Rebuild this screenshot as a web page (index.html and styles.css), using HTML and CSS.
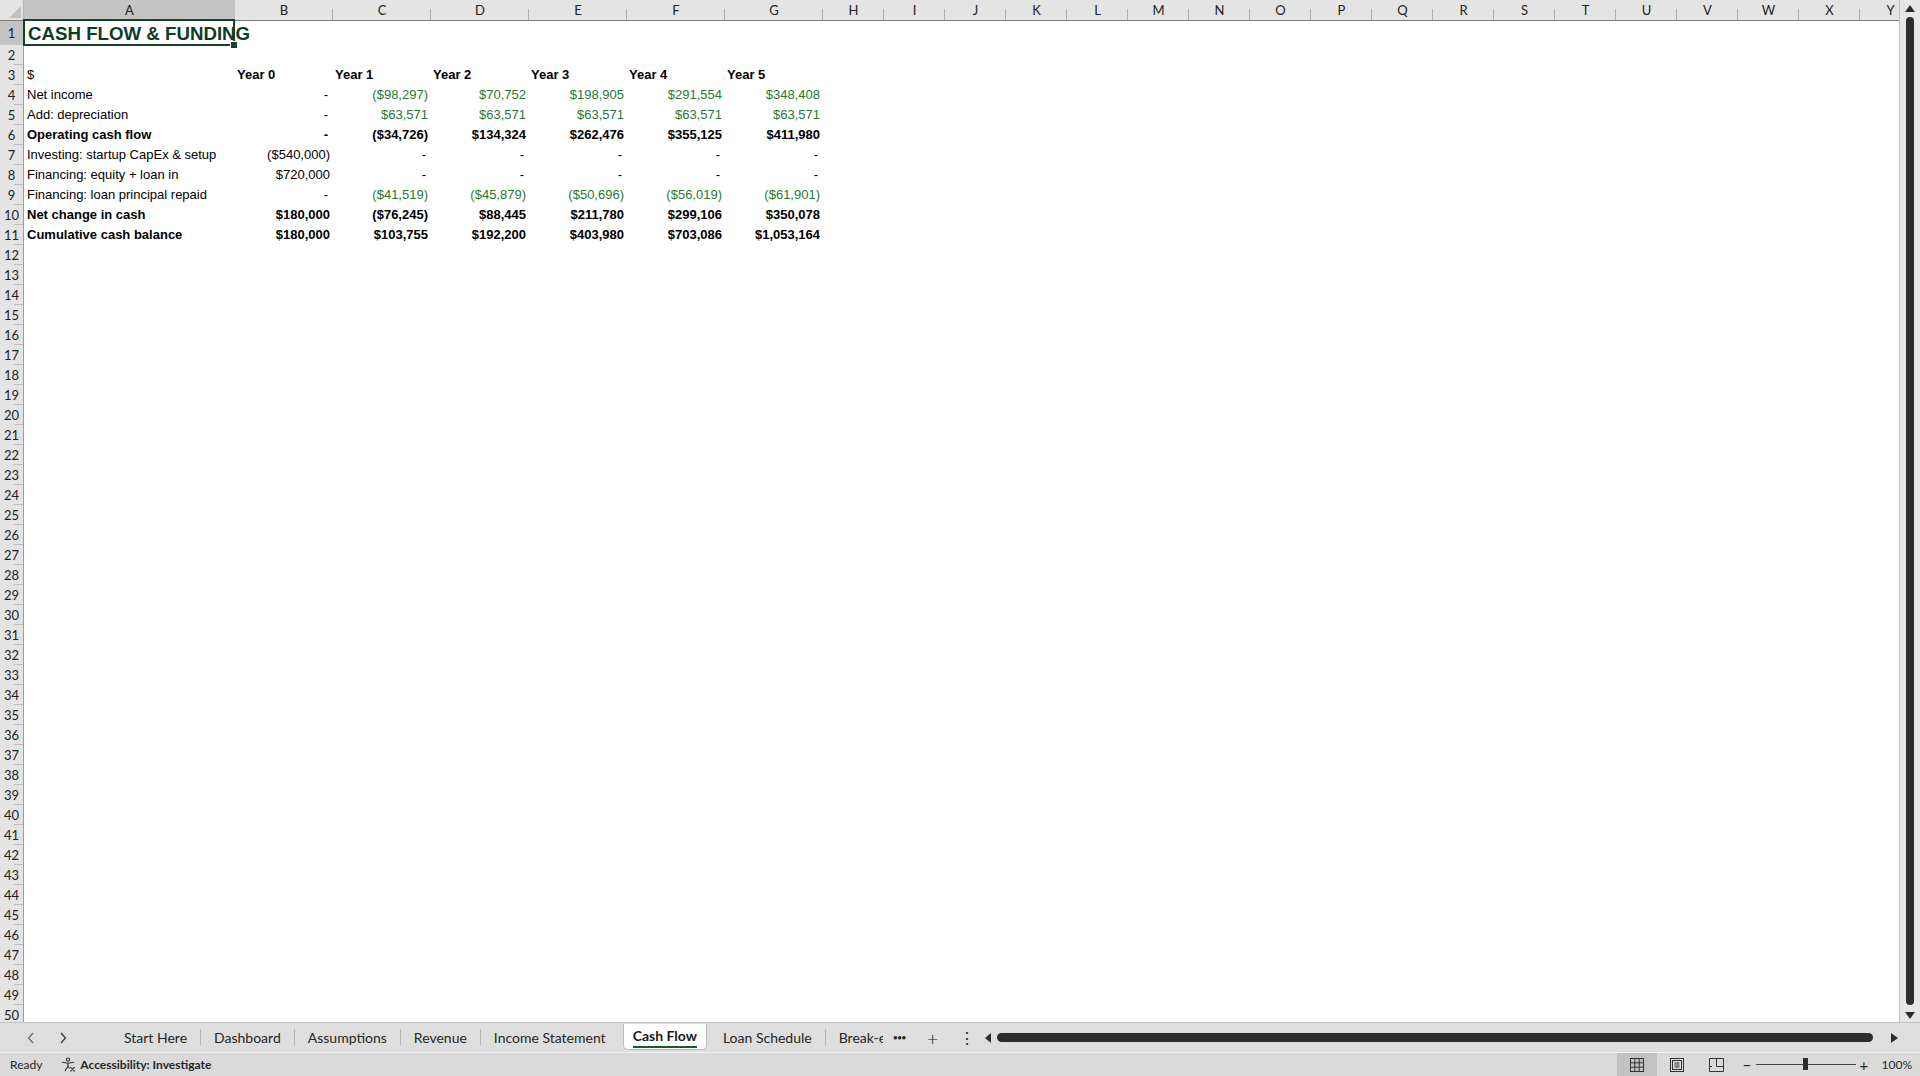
FILE: index.html
```html
<!DOCTYPE html>
<html>
<head>
<meta charset="utf-8">
<title>Cash Flow</title>
<link rel="stylesheet" href="styles.css">
</head>
<body>
<div class="app">
  <div class="main">
    <div class="sheet">
      <div class="colhead">
        <div class="corner"><span class="tri"></span></div>
        <div class="ch sel">A</div>
        <div class="ch">B</div><div class="ch">C</div><div class="ch">D</div><div class="ch">E</div><div class="ch">F</div><div class="ch">G</div>
        <div class="ch">H</div><div class="ch">I</div><div class="ch">J</div><div class="ch">K</div><div class="ch">L</div><div class="ch">M</div>
        <div class="ch">N</div><div class="ch">O</div><div class="ch">P</div><div class="ch">Q</div><div class="ch">R</div><div class="ch">S</div>
        <div class="ch">T</div><div class="ch">U</div><div class="ch">V</div><div class="ch">W</div><div class="ch">X</div><div class="ch">Y</div>
      </div>
      <div class="row r1"><div class="rh sel">1</div><div class="c title selcell">CASH FLOW &amp; FUNDING</div></div>
      <div class="row"><div class="rh">2</div></div>
      <div class="row"><div class="rh">3</div><div class="c lbl">$</div><div class="c hd">Year 0</div><div class="c hd">Year 1</div><div class="c hd">Year 2</div><div class="c hd">Year 3</div><div class="c hd">Year 4</div><div class="c hd">Year 5</div></div>
      <div class="row"><div class="rh">4</div><div class="c lbl">Net income</div><div class="c num dash">-</div><div class="c num g">($98,297)</div><div class="c num g">$70,752</div><div class="c num g">$198,905</div><div class="c num g">$291,554</div><div class="c num g">$348,408</div></div>
      <div class="row"><div class="rh">5</div><div class="c lbl">Add: depreciation</div><div class="c num dash">-</div><div class="c num g">$63,571</div><div class="c num g">$63,571</div><div class="c num g">$63,571</div><div class="c num g">$63,571</div><div class="c num g">$63,571</div></div>
      <div class="row bold"><div class="rh">6</div><div class="c lbl">Operating cash flow</div><div class="c num dash">-</div><div class="c num">($34,726)</div><div class="c num">$134,324</div><div class="c num">$262,476</div><div class="c num">$355,125</div><div class="c num">$411,980</div></div>
      <div class="row"><div class="rh">7</div><div class="c lbl">Investing: startup CapEx &amp; setup</div><div class="c num">($540,000)</div><div class="c num dash">-</div><div class="c num dash">-</div><div class="c num dash">-</div><div class="c num dash">-</div><div class="c num dash">-</div></div>
      <div class="row"><div class="rh">8</div><div class="c lbl">Financing: equity + loan in</div><div class="c num">$720,000</div><div class="c num dash">-</div><div class="c num dash">-</div><div class="c num dash">-</div><div class="c num dash">-</div><div class="c num dash">-</div></div>
      <div class="row"><div class="rh">9</div><div class="c lbl">Financing: loan principal repaid</div><div class="c num dash">-</div><div class="c num g">($41,519)</div><div class="c num g">($45,879)</div><div class="c num g">($50,696)</div><div class="c num g">($56,019)</div><div class="c num g">($61,901)</div></div>
      <div class="row bold"><div class="rh">10</div><div class="c lbl">Net change in cash</div><div class="c num">$180,000</div><div class="c num">($76,245)</div><div class="c num">$88,445</div><div class="c num">$211,780</div><div class="c num">$299,106</div><div class="c num">$350,078</div></div>
      <div class="row bold"><div class="rh">11</div><div class="c lbl">Cumulative cash balance</div><div class="c num">$180,000</div><div class="c num">$103,755</div><div class="c num">$192,200</div><div class="c num">$403,980</div><div class="c num">$703,086</div><div class="c num">$1,053,164</div></div>
      <div class="row"><div class="rh">12</div></div>
      <div class="row"><div class="rh">13</div></div>
      <div class="row"><div class="rh">14</div></div>
      <div class="row"><div class="rh">15</div></div>
      <div class="row"><div class="rh">16</div></div>
      <div class="row"><div class="rh">17</div></div>
      <div class="row"><div class="rh">18</div></div>
      <div class="row"><div class="rh">19</div></div>
      <div class="row"><div class="rh">20</div></div>
      <div class="row"><div class="rh">21</div></div>
      <div class="row"><div class="rh">22</div></div>
      <div class="row"><div class="rh">23</div></div>
      <div class="row"><div class="rh">24</div></div>
      <div class="row"><div class="rh">25</div></div>
      <div class="row"><div class="rh">26</div></div>
      <div class="row"><div class="rh">27</div></div>
      <div class="row"><div class="rh">28</div></div>
      <div class="row"><div class="rh">29</div></div>
      <div class="row"><div class="rh">30</div></div>
      <div class="row"><div class="rh">31</div></div>
      <div class="row"><div class="rh">32</div></div>
      <div class="row"><div class="rh">33</div></div>
      <div class="row"><div class="rh">34</div></div>
      <div class="row"><div class="rh">35</div></div>
      <div class="row"><div class="rh">36</div></div>
      <div class="row"><div class="rh">37</div></div>
      <div class="row"><div class="rh">38</div></div>
      <div class="row"><div class="rh">39</div></div>
      <div class="row"><div class="rh">40</div></div>
      <div class="row"><div class="rh">41</div></div>
      <div class="row"><div class="rh">42</div></div>
      <div class="row"><div class="rh">43</div></div>
      <div class="row"><div class="rh">44</div></div>
      <div class="row"><div class="rh">45</div></div>
      <div class="row"><div class="rh">46</div></div>
      <div class="row"><div class="rh">47</div></div>
      <div class="row"><div class="rh">48</div></div>
      <div class="row"><div class="rh">49</div></div>
      <div class="row"><div class="rh">50</div></div>
    </div>
    <div class="vscroll">
      <span class="arr up"></span>
      <span class="vthumb"></span>
      <span class="arr down"></span>
    </div>
  </div>

  <div class="tabbar">
    <div class="nav">
      <svg width="8" height="12" viewBox="0 0 8 12"><path d="M6 1 L1.5 6 L6 11" fill="none" stroke="#666" stroke-width="1.2"/></svg>
      <svg width="8" height="12" viewBox="0 0 8 12"><path d="M2 1 L6.5 6 L2 11" fill="none" stroke="#333" stroke-width="1.2"/></svg>
    </div>
    <div class="tabs">
      <div class="tab">Start Here</div><span class="sep"></span>
      <div class="tab">Dashboard</div><span class="sep"></span>
      <div class="tab">Assumptions</div><span class="sep"></span>
      <div class="tab">Revenue</div><span class="sep"></span>
      <div class="tab">Income Statement</div>
      <div class="tab active"><span class="lab">Cash Flow</span></div>
      <div class="tab">Loan Schedule</div><span class="sep"></span>
      <div class="tab clip"><span class="cliptext">Break-even</span></div>
      <div class="more">•••</div>
      <div class="plus">+</div>
      <div class="kebab">⋮</div>
    </div>
    <div class="hscroll">
      <span class="harr left"></span>
      <span class="hthumb"></span>
      <span class="harr right"></span>
    </div>
  </div>

  <div class="status">
    <div class="st-left">
      <span class="ready">Ready</span>
      <span class="acc">
        <svg width="15" height="15" viewBox="0 0 15 15" fill="none" stroke="#333" stroke-width="1.1" stroke-linecap="round">
          <circle cx="7" cy="2.6" r="1.6"/>
          <path d="M1.5 5.2 L7 6.2 L12.5 5.2"/>
          <path d="M7 6.2 V9.2 L4.2 13.6"/>
          <path d="M7 9.2 L8.2 11"/>
          <path d="M9.6 10.4 L13.4 14.2 M13.4 10.4 L9.6 14.2"/>
        </svg>
        <b>Accessibility: Investigate</b>
      </span>
    </div>
    <div class="st-right">
      <span class="view on">
        <svg width="14" height="14" viewBox="0 0 14 14" fill="none" stroke="#333" stroke-width="1"><rect x="0.5" y="0.5" width="13" height="13"/><path d="M4.8 0.5 V13.5 M9.2 0.5 V13.5 M0.5 4.8 H13.5 M0.5 9.2 H13.5"/></svg>
      </span>
      <span class="view">
        <svg width="14" height="14" viewBox="0 0 14 14" fill="none" stroke="#333" stroke-width="1"><rect x="0.5" y="0.5" width="13" height="13"/><rect x="2.5" y="2.5" width="9" height="9"/><path d="M4.5 5 H9.5 M4.5 7 H9.5 M4.5 9 H9.5"/></svg>
      </span>
      <span class="view">
        <svg width="15" height="14" viewBox="0 0 15 14" fill="none" stroke="#333" stroke-width="1"><path d="M0.5 0.5 H14.5 V13.5 H0.5 Z"/><path d="M7.5 0.5 V8.5 H14.5"/><path d="M0.5 8.5 H3"/></svg>
      </span>
      <span class="zoom">
        <span class="zm">−</span>
        <span class="slider"><span class="knob"></span></span>
        <span class="zp">+</span>
        <span class="pct">100%</span>
      </span>
    </div>
  </div>
</div>
</body>
</html>
```

FILE: styles.css
```css
* { box-sizing: border-box; }

html, body {
  margin: 0;
  padding: 0;
  width: 1920px;
  height: 1076px;
  overflow: hidden;
  background: #ffffff;
}

body {
  font-family: "Liberation Sans", Arial, sans-serif;
  font-size: 13px;
  color: #000;
}

.app {
  width: 1920px;
  height: 1076px;
  display: flex;
  flex-direction: column;
}

/* ---------- sheet ---------- */
.main {
  height: 1023px;
  display: flex;
  border-bottom: 1px solid #c4c4c4;
  flex: none;
}

.sheet {
  flex: 1;
  overflow: hidden;
  background: #fff;
}

.colhead {
  display: grid;
  grid-template-columns: 24px 211px repeat(6, 98px) repeat(18, 61px);
  height: 21px;
  background: #e4e4e4;
  border-bottom: 1px solid #7c7c7c;
  font-family: Lato, "Liberation Sans", sans-serif;
  font-size: 13px;
  color: #222;
}

.corner {
  position: relative;
  border-right: 1px solid #b4b4b4;
}

.corner .tri {
  position: absolute;
  right: 2px;
  bottom: 2px;
  width: 0;
  height: 0;
  border-left: 12px solid transparent;
  border-bottom: 12px solid #c2c2c2;
}

.ch {
  position: relative;
  text-align: center;
  line-height: 20px;
}

.ch::after {
  content: "";
  position: absolute;
  right: 0;
  top: 9px;
  bottom: 0;
  width: 1px;
  background: #b0b0b0;
}

.ch.sel {
  background: #c4c4c4;
}

.ch.sel::after { display: none; }

.row {
  display: grid;
  grid-template-columns: 24px 211px repeat(6, 98px);
  height: 20px;
  line-height: 20px;
}

.row.r1 { height: 24px; line-height: 25px; }

.rh {
  position: relative;
  background: #e4e4e4;
  border-right: 1px solid #9c9c9c;
  text-align: center;
  font-family: Lato, "Liberation Sans", sans-serif;
  font-size: 13px;
  color: #222;
}

.rh::after {
  content: "";
  position: absolute;
  right: 0;
  bottom: 0;
  width: 9px;
  height: 1px;
  background: #bdbdbd;
}

.rh.sel { background: #c4c4c4; }

.c {
  white-space: nowrap;
  overflow: visible;
}

.lbl { padding-left: 3px; }

.hd {
  font-weight: bold;
  padding-left: 2px;
}

.num {
  text-align: right;
  padding-right: 3px;
}

.dash { padding-right: 5px; }

.g { color: #267a2b; }

.bold .c { font-weight: bold; }

.title {
  position: relative;
  padding-left: 4px;
  font-size: 18.7px;
  font-weight: bold;
  color: #103b28;
  z-index: 2;
}

.selcell::before {
  content: "";
  position: absolute;
  left: -1px;
  top: -2px;
  right: 0;
  bottom: 0;
  border: 2px solid #17402a;
}

.selcell::after {
  content: "";
  position: absolute;
  right: -3px;
  bottom: -3px;
  width: 6px;
  height: 6px;
  background: #17402a;
  border: 1px solid #fff;
}

/* ---------- vertical scrollbar ---------- */
.vscroll {
  width: 21px;
  flex: none;
  background: #e6e6e6;
  border-left: 1px solid #c0c0c0;
  display: flex;
  flex-direction: column;
  align-items: center;
  padding: 5px 0 3px;
}

.arr {
  width: 0;
  height: 0;
  border-left: 5px solid transparent;
  border-right: 5px solid transparent;
}

.arr.up { border-bottom: 7px solid #2d2d2d; }
.arr.down { border-top: 7px solid #2d2d2d; }

.vthumb {
  flex: 1;
  width: 8px;
  margin: 5px 0 7px;
  border-radius: 4px;
  background: #2d2d2d;
}

/* ---------- tab bar ---------- */
.tabbar {
  height: 29px;
  flex: none;
  display: flex;
  align-items: center;
  background: #dedede;
  font-family: Lato, "Liberation Sans", sans-serif;
  font-size: 14px;
  color: #262626;
}

.nav {
  width: 111px;
  display: flex;
  align-items: center;
  gap: 24px;
  padding-left: 27px;
}

.tabs {
  display: flex;
  align-items: center;
  height: 100%;
}

.tab {
  padding: 0 13px;
  height: 24px;
  line-height: 24px;
  white-space: nowrap;
}

.sep {
  width: 1px;
  height: 17px;
  background: #b8b8b8;
}

.tab.active {
  background: #fff;
  border: 1px solid #bcbcbc;
  border-top: none;
  border-radius: 0 0 5px 5px;
  margin: 0 3px 0 4px;
  padding: 0 9px;
  height: 26px;
  align-self: flex-start;
  margin-top: 1px;
  font-weight: bold;
  color: #1a1a1a;
}

.tab.active .lab {
  display: inline-block;
  line-height: 20px;
  border-bottom: 2px solid #1c5a2e;
}

.tab.clip {
  padding-right: 0;
}

.cliptext {
  display: inline-block;
  width: 44px;
  overflow: hidden;
  vertical-align: top;
}

.more {
  font-size: 9px;
  letter-spacing: -1px;
  margin-left: 10px;
  width: 24px;
}

.plus {
  font-size: 20px;
  font-weight: 300;
  margin-left: 10px;
  width: 32px;
}

.kebab {
  font-size: 16px;
  width: 20px;
}

.hscroll {
  flex: 1;
  display: flex;
  align-items: center;
  padding-left: 6px;
  padding-right: 22px;
}

.harr {
  width: 0;
  height: 0;
  border-top: 5px solid transparent;
  border-bottom: 5px solid transparent;
}

.harr.left { border-right: 6px solid #2d2d2d; }
.harr.right { border-left: 7px solid #2d2d2d; margin-left: 18px; }

.hthumb {
  flex: 1;
  height: 9px;
  margin-left: 6px;
  border-radius: 5px;
  background: #2d2d2d;
}

/* ---------- status bar ---------- */
.status {
  height: 24px;
  flex: none;
  display: flex;
  justify-content: space-between;
  align-items: center;
  background: #dadada;
  border-top: 1px solid #f2f2f2;
  font-family: Lato, "Liberation Sans", sans-serif;
  font-size: 12px;
  color: #262626;
}

.st-left {
  display: flex;
  align-items: center;
  padding-left: 10px;
}

.ready { margin-right: 19px; }

.acc {
  display: flex;
  align-items: center;
  gap: 4px;
}

.acc b { font-weight: bold; }

.st-right {
  display: flex;
  align-items: center;
  height: 100%;
}

.view {
  width: 40px;
  height: 100%;
  display: flex;
  align-items: center;
  justify-content: center;
}

.view.on { background: #c2c2c2; }

.zoom {
  display: flex;
  align-items: center;
  margin-left: 6px;
  padding-right: 8px;
}

.zm { font-size: 15px; width: 13px; }

.slider {
  position: relative;
  width: 100px;
  height: 1px;
  background: #444;
  margin-right: 4px;
}

.knob {
  position: absolute;
  left: 47px;
  top: -6px;
  width: 5px;
  height: 12px;
  background: #2d2d2d;
}

.zp { font-size: 15px; width: 22px; }

.pct { font-size: 12px; }
```
